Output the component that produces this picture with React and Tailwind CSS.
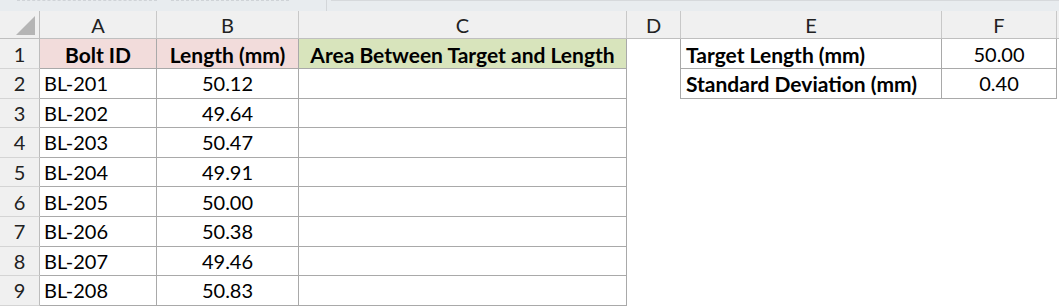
import React from "react";

const cols = [
  { key: "A", w: "w-[117px]" },
  { key: "B", w: "w-[142px]" },
  { key: "C", w: "w-[328px]" },
  { key: "D", w: "w-[54px]" },
  { key: "E", w: "w-[261px]" },
  { key: "F", w: "w-[115px]" },
];

const bolts = [
  ["BL-201", "50.12"],
  ["BL-202", "49.64"],
  ["BL-203", "50.47"],
  ["BL-204", "49.91"],
  ["BL-205", "50.00"],
  ["BL-206", "50.38"],
  ["BL-207", "49.46"],
  ["BL-208", "50.83"],
];

const side = [
  ["Target Length (mm)", "50.00"],
  ["Standard Deviation (mm)", "0.40"],
];

function RowHead({ n, h }) {
  return (
    <div
      className={`w-[40px] ${h} shrink-0 flex items-center justify-center bg-[#f0f0f0] border-r border-r-[#bdbdbd] border-b border-b-[#d4d4d4] text-[#222]`}
    >
      {n}
    </div>
  );
}

function Cell({ w, h, className = "", children }) {
  return (
    <div className={`${w} ${h} shrink-0 flex items-center ${className}`}>
      {children}
    </div>
  );
}

function App() {
  const grid = "border-r border-b border-[#a9a9a9]";
  const bold = "font-bold text-[21px] pt-[1px]";
  return (
    <div className="w-[1059px] h-[307px] bg-white overflow-hidden font-['Lato',sans-serif] text-[20px] leading-none text-black">
      {/* formula bar remnant */}
      <div className="h-[11px] flex bg-[#e8ecef]">
        <div className="w-[326px] flex gap-[14px] px-[17px]">
          <div className="w-[140px] h-px border-t border-dashed border-[#cfd3d7]" />
          <div className="w-[118px] h-px border-t border-dashed border-[#cfd3d7]" />
        </div>
        <div className="w-px bg-[#d3d6d9]" />
        <div className="flex-1 pl-[4px]">
          <div className="h-px bg-[#d6d9dc]" />
        </div>
      </div>

      {/* column headers */}
      <div className="flex h-[28px] bg-[#f0f0f0] border-b border-[#bfbfbf]">
        <div className="w-[40px] shrink-0 flex items-end justify-end pr-[4px] pb-[3px] border-r border-[#bdbdbd]">
          <svg width="19" height="19" viewBox="0 0 19 19">
            <polygon points="19,0 19,19 0,19" fill="#b5b5b5" />
          </svg>
        </div>
        {cols.map((c) => (
          <div
            key={c.key}
            className={`${c.w} shrink-0 flex items-center justify-center border-r border-[#c8c8c8] text-[#222]`}
          >
            {c.key}
          </div>
        ))}
      </div>

      {/* row 1 */}
      <div className="flex">
        <RowHead n={1} h="h-[30px]" />
        <Cell w="w-[117px]" h="h-[30px]" className={`justify-center ${bold} bg-[#f2dcdb] ${grid}`}>
          Bolt ID
        </Cell>
        <Cell w="w-[142px]" h="h-[30px]" className={`justify-center ${bold} bg-[#f2dcdb] ${grid}`}>
          Length (mm)
        </Cell>
        <Cell w="w-[328px]" h="h-[30px]" className={`justify-center ${bold} bg-[#d8e4bc] ${grid}`}>
          Area Between Target and Length
        </Cell>
        <Cell w="w-[54px]" h="h-[30px]" className="border-r border-[#a9a9a9]" />
        <Cell w="w-[261px]" h="h-[30px]" className={`pl-[5px] ${bold} ${grid}`}>
          {side[0][0]}
        </Cell>
        <Cell w="w-[115px]" h="h-[30px]" className={`justify-center ${grid}`}>
          {side[0][1]}
        </Cell>
      </div>

      {/* data rows */}
      {bolts.map(([id, len], i) => (
        <div key={id} className="flex">
          <RowHead n={i + 2} h="h-[29.6px]" />
          <Cell w="w-[117px]" h="h-[29.6px]" className={`pl-[4px] ${grid}`}>
            {id}
          </Cell>
          <Cell w="w-[142px]" h="h-[29.6px]" className={`justify-center ${grid}`}>
            {len}
          </Cell>
          <Cell w="w-[328px]" h="h-[29.6px]" className={grid} />
          <Cell
            w="w-[54px]"
            h="h-[29.6px]"
            className={i === 0 ? "border-r border-[#a9a9a9]" : ""}
          />
          {i === 0 && (
            <>
              <Cell w="w-[261px]" h="h-[29.6px]" className={`pl-[5px] ${bold} ${grid}`}>
                {side[1][0]}
              </Cell>
              <Cell w="w-[115px]" h="h-[29.6px]" className={`justify-center ${grid}`}>
                {side[1][1]}
              </Cell>
            </>
          )}
        </div>
      ))}
    </div>
  );
}

export default App;
